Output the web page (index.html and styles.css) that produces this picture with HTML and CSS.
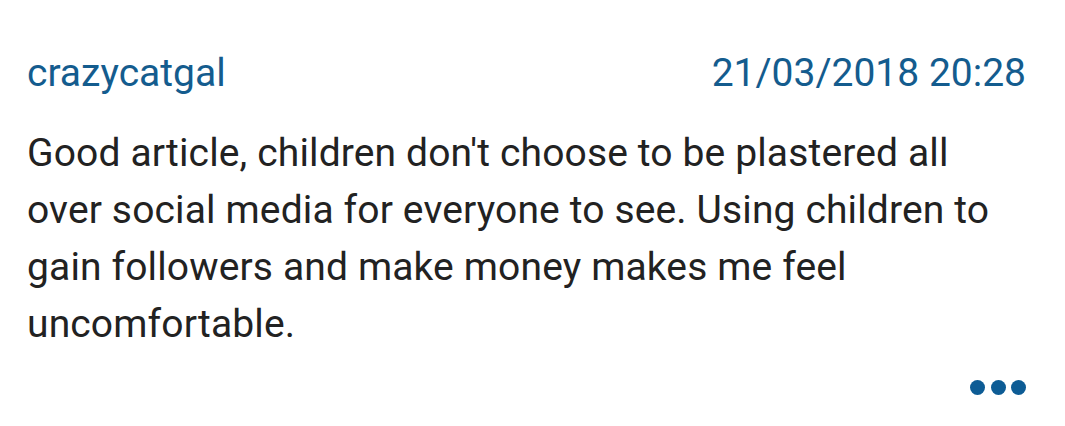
FILE: index.html
```html
<!DOCTYPE html>
<html>
<head>
<meta charset="utf-8">
<link rel="stylesheet" href="styles.css">
</head>
<body>
<div class="comment">
  <div class="meta">
    <span class="author">crazycatgal</span>
    <span class="date">21/03/2018 20:28</span>
  </div>
  <p class="body">Good article, children don't choose to be plastered all over social media for everyone to see. Using children to gain followers and make money makes me feel uncomfortable.</p>
  <div class="actions">
    <span class="dots"><i></i><i></i><i></i></span>
  </div>
</div>
</body>
</html>
```

FILE: styles.css
```css
html, body {
  margin: 0;
  padding: 0;
  background: #ffffff;
}
body {
  font-family: Roboto, "Liberation Sans", sans-serif;
  width: 1065px;
  height: 426px;
  overflow: hidden;
}
.comment {
  padding: 51px 39px 0 27px;
}
.meta {
  display: flex;
  justify-content: space-between;
  align-items: baseline;
  color: #145c8e;
  font-size: 39px;
  line-height: 44px;
}
.body {
  margin: 30px 0 0 0;
  max-width: 985px;
  font-size: 39px;
  letter-spacing: 0.14px;
  line-height: 57px;
  color: #222222;
}
.actions {
  display: flex;
  justify-content: flex-end;
  padding-top: 27px;
}
.dots {
  display: flex;
  gap: 5.5px;
}
.dots i {
  display: block;
  width: 15px;
  height: 15px;
  border-radius: 50%;
  background: #0d5c95;
}
```
